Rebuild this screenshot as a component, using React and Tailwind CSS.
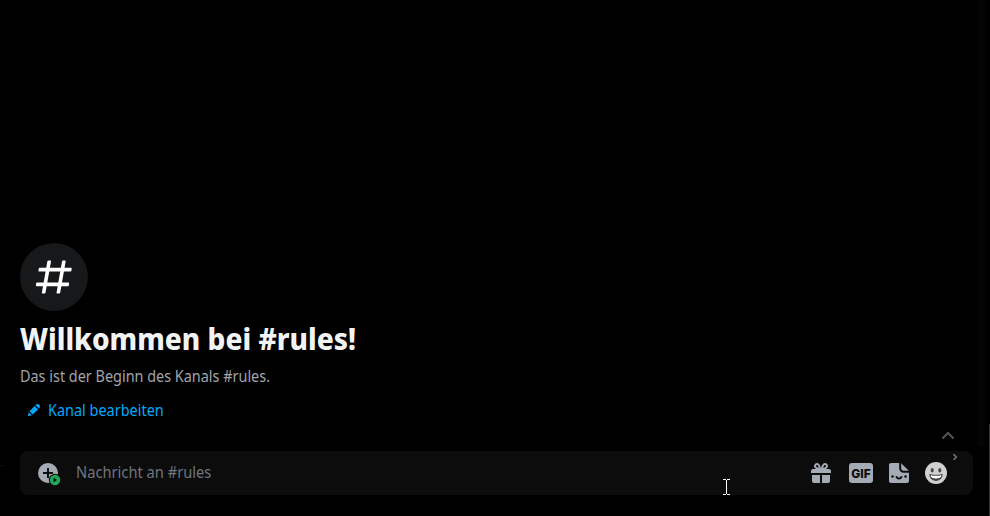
import React from 'react';

function HashIcon() {
  return (
    <svg width="44" height="44" viewBox="0 0 24 24" className="text-white">
      <path
        fill="currentColor"
        fillRule="evenodd"
        d="M5.88657 21C5.57547 21 5.3399 20.7189 5.39427 20.4126L6.00001 17H2.59511C2.28449 17 2.04905 16.7198 2.10259 16.4138L2.27759 15.4138C2.31946 15.1746 2.52722 15 2.77011 15H6.35001L7.41001 9H4.00511C3.69449 9 3.45905 8.71977 3.51259 8.41381L3.68759 7.41381C3.72946 7.17456 3.93722 7 4.18011 7H7.76001L8.39677 3.41262C8.43914 3.17391 8.64664 3 8.88907 3H9.87344C10.1845 3 10.4201 3.28107 10.3657 3.58738L9.76001 7H15.76L16.3968 3.41262C16.4391 3.17391 16.6466 3 16.8891 3H17.8734C18.1845 3 18.4201 3.28107 18.3657 3.58738L17.76 7H21.1649C21.4755 7 21.711 7.28023 21.6574 7.58619L21.4824 8.58619C21.4406 8.82544 21.2328 9 20.9899 9H17.41L16.35 15H19.7549C20.0655 15 20.301 15.2802 20.2474 15.5862L20.0724 16.5862C20.0306 16.8254 19.8228 17 19.5799 17H16L15.3632 20.5874C15.3209 20.8261 15.1134 21 14.8709 21H13.8866C13.5755 21 13.3399 20.7189 13.3943 20.4126L14 17H8.00001L7.36325 20.5874C7.32088 20.8261 7.11337 21 6.87094 21H5.88657ZM9.41045 9L8.35045 15H14.3504L15.4104 9H9.41045Z"
      />
    </svg>
  );
}

function PencilIcon() {
  return (
    <svg width="16" height="16" viewBox="0 0 24 24" className="shrink-0">
      <path
        fill="currentColor"
        fillRule="evenodd"
        d="M19.2929 9.8299L19.9409 9.18278C21.353 7.77064 21.353 5.47197 19.9409 4.05892C18.5287 2.64678 16.2292 2.64678 14.817 4.05892L14.1699 4.70694L19.2929 9.8299ZM12.8962 5.97688L5.18469 13.6906L10.3085 18.813L18.0201 11.0992L12.8962 5.97688ZM4.11851 20.9704L8.75906 19.8112L4.18692 15.239L3.02678 19.8796C2.95028 20.1856 3.04028 20.5105 3.26349 20.7337C3.48669 20.9569 3.8116 21.046 4.11851 20.9704Z"
      />
    </svg>
  );
}

function GiftIcon() {
  return (
    <svg width="24" height="24" viewBox="0 0 24 24">
      <path
        fill="currentColor"
        fillRule="evenodd"
        d="M16.886 7.999H20C21.104 7.999 22 8.896 22 9.999V11.999H2V9.999C2 8.896 2.897 7.999 4 7.999H7.114C6.663 7.764 6.236 7.477 5.879 7.121C4.709 5.951 4.709 4.048 5.879 2.879C7.012 1.746 8.986 1.746 10.121 2.877C11.758 4.514 11.979 7.595 11.998 7.941L11.99 7.999H12.01L12.002 7.941C12.022 7.596 12.242 4.515 13.879 2.878C15.014 1.745 16.986 1.746 18.121 2.877C19.29 4.049 19.29 5.952 18.121 7.121C17.764 7.477 17.337 7.764 16.886 7.999ZM7.293 5.707C6.903 5.316 6.903 4.682 7.293 4.292C7.481 4.103 7.732 4 8 4C8.268 4 8.519 4.103 8.707 4.292C9.297 4.882 9.641 5.94 9.825 6.822C8.945 6.639 7.879 6.293 7.293 5.707ZM14.174 6.824C14.359 5.941 14.702 4.883 15.293 4.293C15.481 4.103 15.732 4 16 4C16.268 4 16.519 4.103 16.706 4.291C17.096 4.682 17.097 5.316 16.707 5.707C16.116 6.298 15.057 6.642 14.174 6.824ZM3 13.999V19.999C3 21.102 3.897 21.999 5 21.999H11V13.999H3ZM13 13.999V21.999H19C20.104 21.999 21 21.102 21 19.999V13.999H13Z"
      />
    </svg>
  );
}

function StickerIcon() {
  return (
    <svg width="20" height="20" viewBox="0 0 20 20">
      <path
        fill="currentColor"
        d="M2 0H10.2V5.2C10.2 7.9 12.1 9.8 14.8 9.8H20V18C20 19.1 19.1 20 18 20H2C0.9 20 0 19.1 0 18V2C0 0.9 0.9 0 2 0ZM12.2 0.2L19.8 7.8H14.8C13.3 7.8 12.2 6.7 12.2 5.2V0.2Z"
      />
      <circle cx="3.5" cy="13.5" r="1.25" fill="#0c0c0c" />
      <circle cx="16.5" cy="13.5" r="1.25" fill="#0c0c0c" />
      <path d="M7.2 13.2C7.7 14.7 8.7 15.5 10 15.5C11.3 15.5 12.3 14.7 12.8 13.2" fill="none" stroke="#0c0c0c" strokeWidth="1.8" />
    </svg>
  );
}

function SmileIcon() {
  return (
    <svg width="22" height="22" viewBox="0 0 22 22">
      <circle cx="11" cy="11" r="11" fill="#d0d0d0" />
      <ellipse cx="7.2" cy="8.3" rx="1.5" ry="2.2" fill="#484848" />
      <ellipse cx="14.8" cy="8.3" rx="1.5" ry="2.2" fill="#484848" />
      <path d="M4.3 12.1C8 13.1 14 13.1 17.7 12.1C17.6 16.2 15 18.9 11 18.9C7 18.9 4.4 16.2 4.3 12.1Z" fill="#484848" />
      <path d="M5.5 13.2C8.8 13.9 13.2 13.9 16.5 13.2C16.2 15.4 14.4 16.4 11 16.4C7.6 16.4 5.8 15.4 5.5 13.2Z" fill="#fff" />
    </svg>
  );
}

function AttachIcon() {
  return (
    <svg width="24" height="24" viewBox="0 0 24 24">
      <circle cx="10" cy="10" r="10" fill="#a5abb4" />
      <path d="M10 5V15M5 10H15" stroke="#0c0c0c" strokeWidth="2" />
      <circle cx="17" cy="17" r="6.2" fill="#0c0c0c" />
      <circle cx="17" cy="17" r="5.2" fill="#23a559" />
      <path d="M15.6 14.7L19 17L15.6 19.3Z" fill="#0c0c0c" />
    </svg>
  );
}

function Composer() {
  return (
    <div className="relative ml-5 flex h-11 w-[953px] items-center rounded-lg bg-[#0c0c0c] pr-[26px] pl-[18px]">
      <div className="mt-1 shrink-0">
        <AttachIcon />
      </div>
      <div className="ml-[14px] grow pb-0.5 text-base leading-[22px] text-[#70757e]">
        <span className="inline-block origin-left scale-x-[0.917]">Nachricht an #rules</span>
      </div>
      <div className="flex items-center text-[#a5abb4]">
        <GiftIcon />
        <div className="ml-4 flex h-5 w-6 items-center justify-center rounded-[3px] bg-[#a5abb4] pt-px font-['Inter'] text-[12px] leading-5 font-extrabold text-[#0c0c0c]">
          GIF
        </div>
        <div className="ml-4">
          <StickerIcon />
        </div>
        <div className="ml-4">
          <SmileIcon />
        </div>
      </div>
      <svg className="absolute top-[2px] right-[15px]" width="6" height="8" viewBox="0 0 6 8">
        <path d="M1.5 1.2L4.4 4L1.5 6.8" fill="none" stroke="#888" strokeWidth="1.2" />
      </svg>
      <svg className="absolute top-[28px] left-[703px]" width="7" height="16" viewBox="0 0 7 16" shapeRendering="crispEdges">
        <path d="M0 0H3V1H4V0H7V1H4V15H7V16H4V15H3V16H0V15H3V1H0Z" fill="#fff" />
      </svg>
    </div>
  );
}

export default function App() {
  return (
    <div className="relative flex h-[516px] w-[990px] flex-col overflow-hidden bg-black font-['Noto_Sans',sans-serif]">
      <div className="flex h-[447px] justify-between">
        <main className="flex flex-col items-start pt-[243px] pl-5 whitespace-nowrap">
          <div className="flex size-[68px] items-center justify-center rounded-full bg-[#17181a]">
            <HashIcon />
          </div>
          <h1 className="mt-2 origin-left scale-x-[0.934] text-[30px] leading-10 font-extrabold text-[#f2f3f5]">Willkommen bei #rules!</h1>
          <p className="mt-[7px] origin-left scale-x-[0.901] text-base leading-5 text-[#a0a4aa]">Das ist der Beginn des Kanals #rules.</p>
          <button className="mt-[14px] ml-[6px] flex h-5 items-center gap-[6px] text-base leading-5 text-[#00a8fc]">
            <PencilIcon />
            <span className="inline-block origin-left scale-x-[0.903]">Kanal bearbeiten</span>
          </button>
        </main>
        <div className="mr-[5px] w-2 rounded-b bg-[#040404]" />
      </div>
      <div className="mt-1">
        <Composer />
      </div>
      <svg className="absolute top-[431px] left-[941px]" width="14" height="9" viewBox="0 0 14 9">
        <path d="M1.5 7.5L7 2L12.5 7.5" fill="none" stroke="#545454" strokeWidth="2" />
      </svg>
      <div className="absolute right-0 bottom-0 h-[92px] w-px bg-[#333]" />
      <div className="absolute top-[465px] left-0 h-px w-1 bg-[#111]" />
    </div>
  );
}
